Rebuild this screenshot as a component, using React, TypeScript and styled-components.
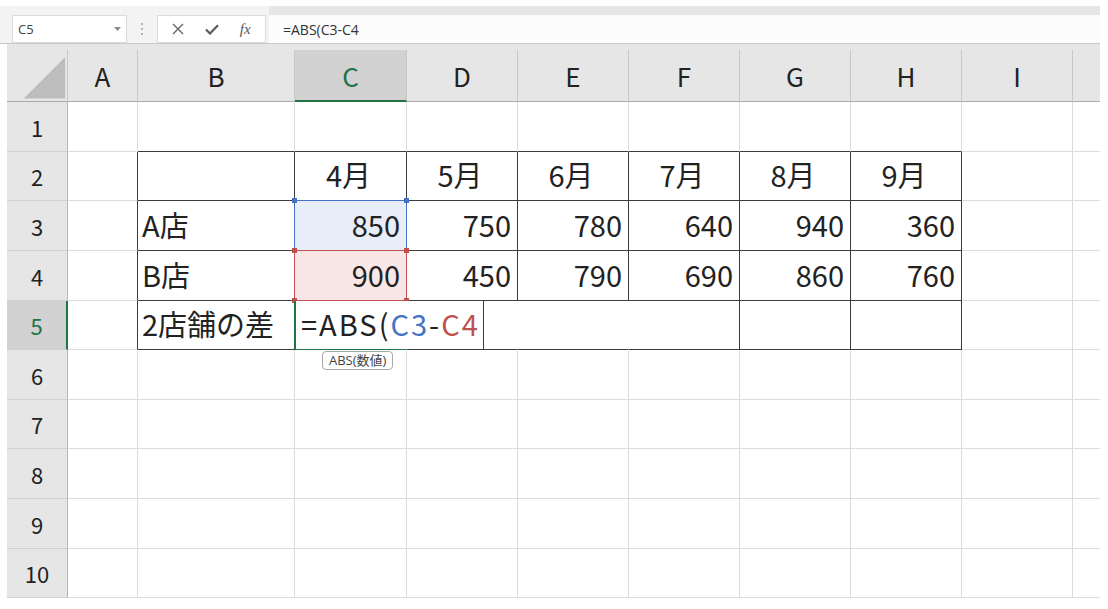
import React from 'react';
import styled, { createGlobalStyle } from 'styled-components';

const GREEN = '#217346';
const BLUE = '#4472c4';
const RED = '#c0504d';
const DARK = '#3c3c3c';
const GRID = '#dcdcdc';

const GlobalStyle = createGlobalStyle`
  html, body { margin: 0; padding: 0; background: #fff; }
  body { font-family: "Noto Sans CJK JP", "Noto Sans", sans-serif; color: #222; }
  * { box-sizing: border-box; }
`;

const Page = styled.div`
  width: 1108px;
  height: 609px;
  padding-top: 6px;
  overflow: hidden;
  background: #fff;
`;

const FormulaBar = styled.div`
  display: flex;
  align-items: flex-end;
  width: 1100px;
  height: 38px;
  padding-left: 12px;
  background: #f3f3f3;
  border-bottom: 1px solid #c9c9c9;
`;

const NameBox = styled.div`
  width: 115px;
  height: 28px;
  background: #fff;
  border: 1px solid #dadada;
  display: flex;
  align-items: center;
  justify-content: space-between;
  padding: 0 5px 0 5px;
  font-family: "Open Sans", "Liberation Sans", sans-serif;
  font-size: 13px;
  color: #444;
`;

const Grip = styled.div`
  width: 30px;
  height: 28px;
  display: flex;
  align-items: center;
  justify-content: center;
`;

const FxBox = styled.div`
  width: 109px;
  height: 28px;
  background: #fff;
  border: 1px solid #dadada;
  display: flex;
  align-items: center;
  justify-content: space-around;
  padding: 0 4px;
`;

const FxText = styled.span`
  font-family: "Liberation Serif", serif;
  font-style: italic;
  font-size: 15px;
  color: #555;
`;

const FormulaInput = styled.div`
  margin-left: 3px;
  flex: 1;
  height: 37px;
  border-top: 9px solid #e6e6e6;
  background: #fcfcfc;
  display: flex;
  align-items: center;
  padding-left: 14px;
  font-family: "Open Sans", "Liberation Sans", sans-serif;
  font-size: 14px;
  color: #333;
`;

const Sheet = styled.div`
  margin-left: 7px;
  display: grid;
  grid-template-columns: 61px 70px 157px 112px repeat(6, 111px) 27px;
  grid-template-rows: 58px 50px 49px 50px 50px 49px 50px 49px 50px 50px 49px;
  width: 1093px;
`;

const HeaderCell = styled.div`
  background: #e6e6e6;
  padding-top: 6px;
`;

const HeaderInner = styled.div<{ $sel?: boolean; $last?: boolean }>`
  height: 52px;
  display: flex;
  align-items: center;
  justify-content: center;
  background: ${(p) => (p.$sel ? '#d2d2d2' : '#e6e6e6')};
  border-right: 1px solid ${(p) => (p.$last ? 'transparent' : '#c8c8c8')};
  border-bottom: ${(p) => (p.$sel ? `2px solid ${GREEN}` : '1px solid #ababab')};
  color: ${(p) => (p.$sel ? GREEN : '#222')};
  font-size: 26px;
  line-height: 1;
  padding-top: ${(p) => (p.$sel ? '1px' : '0')};
`;

const RowHead = styled.div<{ $sel?: boolean }>`
  display: flex;
  align-items: center;
  justify-content: center;
  background: ${(p) => (p.$sel ? '#d2d2d2' : '#e6e6e6')};
  border-right: ${(p) => (p.$sel ? `2px solid ${GREEN}` : '1px solid #b4b4b4')};
  border-bottom: 1px solid #d0d0d0;
  color: ${(p) => (p.$sel ? GREEN : '#222')};
  font-size: 22px;
  line-height: 1;
`;

const Cell = styled.div<{ $rb: string; $bb: string; $align: 'left' | 'center' | 'right'; $bg?: string }>`
  position: relative;
  display: flex;
  align-items: center;
  justify-content: ${(p) => (p.$align === 'left' ? 'flex-start' : p.$align === 'center' ? 'center' : 'flex-end')};
  padding: ${(p) => (p.$align === 'left' ? '0 0 3px 4px' : p.$align === 'right' ? '0 6px 3px 0' : '0 4px 3px 0')};
  border-right: 1px solid ${(p) => p.$rb};
  border-bottom: 1px solid ${(p) => p.$bb};
  background: ${(p) => p.$bg || 'transparent'};
  font-size: 29px;
  line-height: 1;
  white-space: nowrap;
  color: #222;
`;

const RangeBox = styled.div<{ $color: string }>`
  position: absolute;
  top: -1px;
  left: -1px;
  right: -1px;
  bottom: -1px;
  border: 1px solid ${(p) => p.$color};
  z-index: 2;
  pointer-events: none;
`;

const Handle = styled.span<{ $color: string; $v: 'top' | 'bottom'; $h: 'left' | 'right' }>`
  position: absolute;
  width: 5px;
  height: 5px;
  background: ${(p) => p.$color};
  ${(p) => p.$v}: -3px;
  ${(p) => p.$h}: -3px;
`;

const EditBox = styled.div`
  position: absolute;
  top: 0;
  bottom: 0;
  left: -1px;
  width: 190px;
  background: #fff;
  border-left: 2px solid ${GREEN};
  border-right: 1px solid ${DARK};
  display: flex;
  align-items: center;
  padding: 0 0 3px 5px;
  font-size: 29px;
  letter-spacing: 2px;
  line-height: 1;
  white-space: nowrap;
  z-index: 3;
`;

const Ref = styled.span<{ $color: string }>`
  color: ${(p) => p.$color};
`;

const Tip = styled.div`
  position: absolute;
  top: 50px;
  left: 27px;
  height: 19px;
  padding: 0 6px;
  display: flex;
  align-items: center;
  background: #fff;
  border: 1px solid #a8a8a8;
  border-radius: 4px;
  font-family: "Open Sans", "Noto Sans CJK JP", sans-serif;
  font-size: 13px;
  line-height: 1;
  color: #444;
  white-space: nowrap;
  z-index: 4;
`;

const COLS = ['A', 'B', 'C', 'D', 'E', 'F', 'G', 'H', 'I', ''];
const MONTHS = ['4月', '5月', '6月', '7月', '8月', '9月'];
const A_SHOP = [850, 750, 780, 640, 940, 360];
const B_SHOP = [900, 450, 790, 690, 860, 760];
const ROWS = [1, 2, 3, 4, 5, 6, 7, 8, 9, 10];

function Corners({ color, top = true, bottom = true }: { color: string; top?: boolean; bottom?: boolean }) {
  return (
    <>
      {top && <Handle $color={color} $v="top" $h="left" />}
      {top && <Handle $color={color} $v="top" $h="right" />}
      {bottom && <Handle $color={color} $v="bottom" $h="left" />}
      {bottom && <Handle $color={color} $v="bottom" $h="right" />}
    </>
  );
}

function renderCell(row: number, col: number) {
  const inTableRow = row >= 2 && row <= 5;
  let rb = col === 9 ? 'transparent' : GRID;
  let bb = GRID;
  if (inTableRow && col <= 7) rb = DARK;
  if (row >= 1 && row <= 5 && col >= 1 && col <= 7) bb = DARK;
  if (row === 5 && (col === 2 || col === 3 || col === 4)) rb = 'transparent';
  if (row === 5 && col === 2) bb = GREEN;

  let align: 'left' | 'center' | 'right' = 'left';
  let content: React.ReactNode = null;
  let bg: string | undefined;

  if (row === 2 && col >= 2 && col <= 7) {
    align = 'center';
    content = MONTHS[col - 2];
  }
  if (row === 3 && col === 1) content = 'A店';
  if (row === 4 && col === 1) content = 'B店';
  if (row === 5 && col === 1) content = '2店舗の差';
  if ((row === 3 || row === 4) && col >= 2 && col <= 7) {
    align = 'right';
    content = (row === 3 ? A_SHOP : B_SHOP)[col - 2];
  }
  if (row === 3 && col === 2) bg = '#e7eef9';
  if (row === 4 && col === 2) bg = '#f9e7e7';

  return (
    <Cell key={`${row}-${col}`} $rb={rb} $bb={bb} $align={align} $bg={bg}>
      {content}
      {row === 3 && col === 2 && (
        <RangeBox $color={BLUE}>
          <Corners color={BLUE} bottom={false} />
        </RangeBox>
      )}
      {row === 4 && col === 2 && (
        <RangeBox $color={RED}>
          <Corners color={RED} />
        </RangeBox>
      )}
      {row === 5 && col === 2 && (
        <>
          <EditBox>
            =ABS(<Ref $color={BLUE}>C3</Ref>-<Ref $color={RED}>C4</Ref>
          </EditBox>
          <Tip>ABS(数値)</Tip>
        </>
      )}
    </Cell>
  );
}

export default function App() {
  return (
    <Page>
      <GlobalStyle />
      <FormulaBar>
        <NameBox>
          <span>C5</span>
          <svg width="7" height="4" viewBox="0 0 7 4">
            <path d="M0 0 L7 0 L3.5 4 Z" fill="#8a8a8a" />
          </svg>
        </NameBox>
        <Grip>
          <svg width="3" height="12" viewBox="0 0 3 12">
            <rect x="0" y="0" width="2" height="2" fill="#b5b5b5" />
            <rect x="0" y="5" width="2" height="2" fill="#b5b5b5" />
            <rect x="0" y="10" width="2" height="2" fill="#b5b5b5" />
          </svg>
        </Grip>
        <FxBox>
          <svg width="12" height="12" viewBox="0 0 12 12">
            <path d="M1 1 L11 11 M11 1 L1 11" stroke="#666" strokeWidth="1.4" fill="none" />
          </svg>
          <svg width="14" height="11" viewBox="0 0 14 11">
            <path d="M1 5.5 L5 9.5 L13 1.2" stroke="#5a5a5a" strokeWidth="2.2" fill="none" />
          </svg>
          <FxText>fx</FxText>
        </FxBox>
        <FormulaInput>=ABS(C3-C4</FormulaInput>
      </FormulaBar>
      <Sheet>
        <HeaderCell>
          <HeaderInner>
            <svg width="61" height="52" viewBox="0 0 61 52" style={{ display: 'block' }}>
              <polygon points="17,49 59,7 59,49" fill="#bdbdbd" />
            </svg>
          </HeaderInner>
        </HeaderCell>
        {COLS.map((c, i) => (
          <HeaderCell key={`h-${i}`}>
            <HeaderInner $sel={c === 'C'} $last={i === 9}>
              {c}
            </HeaderInner>
          </HeaderCell>
        ))}
        {ROWS.map((r) => (
          <React.Fragment key={`r-${r}`}>
            <RowHead $sel={r === 5}>{r}</RowHead>
            {COLS.map((_, ci) => renderCell(r, ci))}
          </React.Fragment>
        ))}
      </Sheet>
    </Page>
  );
}
